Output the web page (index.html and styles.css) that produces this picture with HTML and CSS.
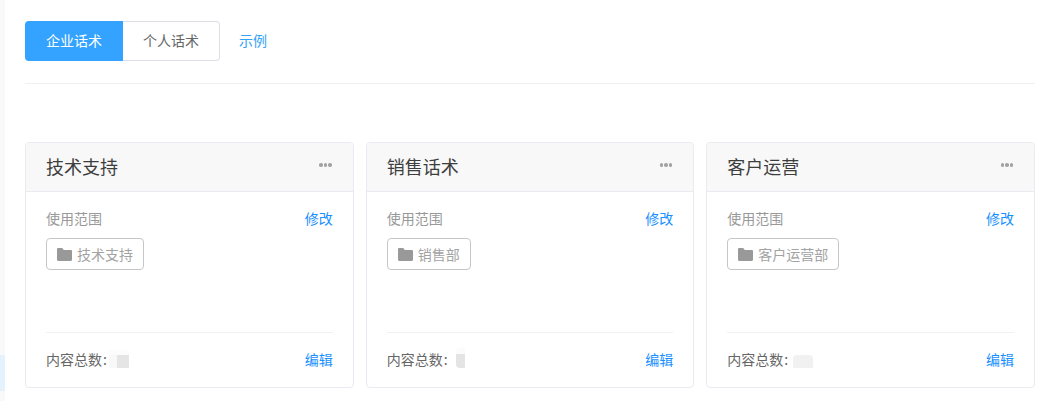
FILE: index.html
```html
<!DOCTYPE html>
<html lang="zh-CN">
<head>
<meta charset="utf-8">
<title>话术</title>
<link rel="stylesheet" href="styles.css">
</head>
<body>
<div class="app">
  <aside class="rail"><div class="rail-active"></div></aside>
  <main class="main">
    <div class="toolbar">
      <div class="tabs">
        <button class="tab tab-on">企业话术</button>
        <button class="tab">个人话术</button>
      </div>
      <a class="sample">示例</a>
    </div>
    <div class="cards">
      <section class="card">
        <header class="card-head"><h2 class="card-title">技术支持</h2><span class="more"><i></i><i></i><i></i></span></header>
        <div class="card-body">
          <div class="row"><span class="label">使用范围</span><a class="link">修改</a></div>
          <div class="scope"><span class="chip"><svg class="folder" viewBox="0 0 15 13"><path d="M0 1.2C0 .5.5 0 1.2 0h4l1.6 1.9h7C14.500 1.900 15 2.400 15 3v8.800c0 .7-.5 1.200-1.200 1.200H1.200C.5 13 0 12.500 0 11.800z"/></svg>技术支持</span></div>
          <div class="foot"><span class="count">内容总数<span class="colon">:</span><span class="blur blur-a"></span></span><a class="link">编辑</a></div>
        </div>
      </section>
      <section class="card">
        <header class="card-head"><h2 class="card-title">销售话术</h2><span class="more"><i></i><i></i><i></i></span></header>
        <div class="card-body">
          <div class="row"><span class="label">使用范围</span><a class="link">修改</a></div>
          <div class="scope"><span class="chip"><svg class="folder" viewBox="0 0 15 13"><path d="M0 1.2C0 .5.5 0 1.2 0h4l1.6 1.9h7C14.500 1.900 15 2.400 15 3v8.800c0 .7-.5 1.200-1.200 1.200H1.200C.5 13 0 12.500 0 11.800z"/></svg>销售部</span></div>
          <div class="foot"><span class="count">内容总数<span class="colon">:</span><span class="blur blur-b"></span></span><a class="link">编辑</a></div>
        </div>
      </section>
      <section class="card">
        <header class="card-head"><h2 class="card-title">客户运营</h2><span class="more"><i></i><i></i><i></i></span></header>
        <div class="card-body">
          <div class="row"><span class="label">使用范围</span><a class="link">修改</a></div>
          <div class="scope"><span class="chip"><svg class="folder" viewBox="0 0 15 13"><path d="M0 1.2C0 .5.5 0 1.2 0h4l1.6 1.9h7C14.500 1.900 15 2.400 15 3v8.800c0 .7-.5 1.200-1.200 1.200H1.200C.5 13 0 12.500 0 11.800z"/></svg>客户运营部</span></div>
          <div class="foot"><span class="count">内容总数<span class="colon">:</span><span class="blur blur-c"></span></span><a class="link">编辑</a></div>
        </div>
      </section>
    </div>
  </main>
</div>
</body>
</html>
```

FILE: styles.css
```css
* { box-sizing: border-box; }
html, body { margin: 0; height: 100%; overflow: hidden; background: #fff; }
body { font-family: "Noto Sans CJK SC", "Liberation Sans", sans-serif; font-size: 14px; }
.app { display: flex; height: 401px; }
.rail { width: 5px; flex: none; background: #f9f9f9; padding-top: 355px; }
.rail-active { height: 36px; background: #e3f2fd; }
.main { flex: 1; min-width: 0; padding: 21px 6px 0 20px; }
.toolbar { display: flex; align-items: center; height: 63px; padding-bottom: 22px; border-bottom: 1px solid #f0f0f3; }
.tabs { display: flex; width: 195px; height: 40px; }
.tab { flex: none; height: 40px; font: inherit; font-size: 14px; line-height: 20px; cursor: pointer; }
.tab:first-child { width: 98px; padding: 0 0 2px; border: 0; border-radius: 4px 0 0 4px; }
.tab:last-child { width: 97px; padding: 0 0 3px; background: #fff; color: #666; border: 1px solid #dcdfe6; border-left: 0; border-radius: 0 4px 4px 0; }
.tab.tab-on { background: #33a3ff; color: #fff; }
.sample { margin-left: 19px; color: #33a3f5; line-height: 38px; height: 40px; }
.cards { display: flex; gap: 12px; margin-top: 58px; }
.card { flex: 1 1 0; height: 246px; border: 1px solid #e9ebf1; border-radius: 4px; display: flex; flex-direction: column; overflow: hidden; }
.card-head { height: 49px; flex: none; background: #f8f8f9; border-bottom: 1px solid #e9ebf1; display: flex; justify-content: space-between; padding: 0 21px 0 20px; }
.card-title { margin: 0; font-size: 18px; font-weight: 400; line-height: 46px; color: #3d3d3d; }
.more { display: flex; gap: 1px; margin-top: 20px; height: 4px; }
.more i { width: 3.500px; height: 3.500px; border-radius: 50%; background: #a3a3a3; }
.card-body { flex: 1; padding: 0 20px; display: flex; flex-direction: column; }
.row { display: flex; justify-content: space-between; height: 20px; line-height: 20px; margin-top: 16px; }
.label { color: #999; }
.link { color: #1890ff; }
.scope { margin-top: 10px; flex: 1; }
.chip { display: inline-flex; align-items: center; height: 32px; padding: 0 10px; border: 1px solid #c6c6c6; border-radius: 4px; color: #a3a3a3; line-height: 30px; }
.folder { width: 15px; height: 13px; margin-right: 5px; fill: #999; }
.foot { height: 55px; border-top: 1px solid #f0f1f4; display: flex; justify-content: space-between; align-items: flex-start; padding-top: 16px; line-height: 20px; }
.count { color: #666; display: flex; }
.colon { margin-left: 1px; }
.blur { display: block; align-self: flex-start; }
.blur-a { width: 20px; height: 18px; margin: 1px 0 0 2px; background: linear-gradient(#fcfcfc 5px, transparent 5px), linear-gradient(90deg, #f8f8f8 40%, #e5e5e6 40%); }
.blur-b { width: 9px; height: 20px; margin: -1px 0 0 8px; border-radius: 4px 0 0 4px; background: linear-gradient(#fbfbfb 6px, #e4e4e4 6px); }
.blur-c { width: 20px; height: 13px; margin: 6px 0 0 5px; border-radius: 4px 4px 0 0; background: #f1f1f1; }
```
